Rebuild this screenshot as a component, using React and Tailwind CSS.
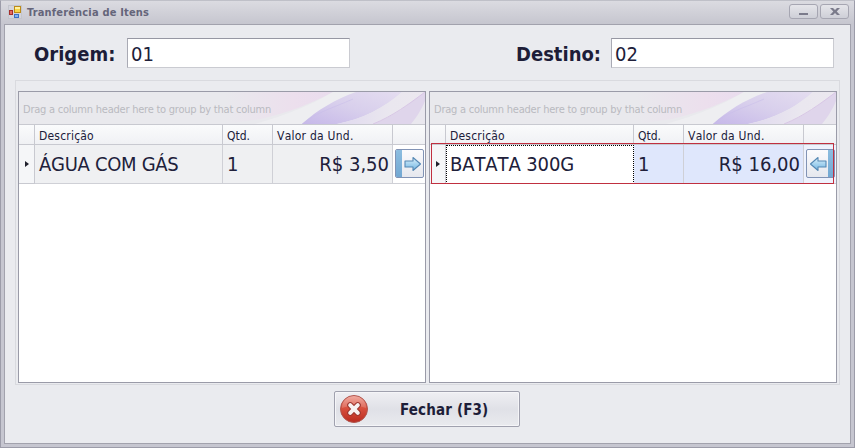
import React from "react";

const BAND =
  "relative h-8 shrink-0 overflow-hidden bg-[#e9e9ed] flex items-center";

function Swoosh({ id }) {
  return (
    <svg className="absolute right-0 top-0" width="200" height="32" viewBox="0 0 200 32">
      <defs>
        <linearGradient id={id + "a"} x1="0" x2="1" y1="1" y2="0">
          <stop offset="0" stopColor="#c6b8e9" />
          <stop offset="0.5" stopColor="#d8cfec" />
          <stop offset="1" stopColor="#e4ddf0" />
        </linearGradient>
        <linearGradient id={id + "b"} x1="0" x2="1" y1="0" y2="0">
          <stop offset="0" stopColor="#e9e9ed" />
          <stop offset="0.65" stopColor="#ecdfed" />
          <stop offset="1" stopColor="#e9dcee" />
        </linearGradient>
        <linearGradient id={id + "c"} x1="0" x2="1" y1="0" y2="0">
          <stop offset="0" stopColor="#e0d9ef" />
          <stop offset="0.6" stopColor="#eae7ef" />
          <stop offset="1" stopColor="#ebe8ef" />
        </linearGradient>
      </defs>
      <path d="M0 0H108C88 11 62 21 36 27L0 32Z" fill={`url(#${id}b)`} />
      <path d="M108 0C86 13 62 23 30 32H77C94 17 113 7 131 0Z" fill="#eeeef1" />
      <path d="M131 0C111 7 92 18 77 32H112C137 27 159 16 177 0Z" fill={`url(#${id}a)`} />
      <path d="M77 32C92 20 108 16 128 7" stroke="#c8bbe9" strokeWidth="1" fill="none" opacity="0.5" />
      <path d="M177 0C160 16 137 27 112 32H148C168 22 187 11 200 0Z" fill={`url(#${id}c)`} />
      <path d="M148 32C168 25 184 12 200 0V10C196 20 192 27 188 32Z" fill="#dfd5eb" />
      <path d="M200 9C196 19 190 27 186 32H200Z" fill="#e9e7ee" />
      <path d="M148 32C168 24 184 12 200 0" stroke="#d8c6e6" fill="none" />
    </svg>
  );
}

function Arrow({ left, id }) {
  return (
    <svg width="18" height="16" viewBox="0 0 18 16" className={left ? "-scale-x-100" : ""}>
      <defs>
        <linearGradient id={id} x1="0" x2="0" y1="0" y2="1">
          <stop offset="0" stopColor="#e0f1fa" />
          <stop offset="0.5" stopColor="#a5d3ef" />
          <stop offset="1" stopColor="#76b6e1" />
        </linearGradient>
      </defs>
      <path d="M1 5H9V1.5L16.5 8L9 14.5V11H1Z" fill={`url(#${id})`} stroke="#5588b4" strokeWidth="1.1" strokeLinejoin="round" />
    </svg>
  );
}

function TransferButton({ left, id }) {
  return (
    <button
      className={`flex h-[29px] w-[29px] items-center overflow-hidden rounded-[2px] border border-[#8193b5] bg-gradient-to-b from-[#fbfbfd] to-[#e6e8ee] ${left ? "flex-row-reverse" : ""}`}
    >
      <span className="h-full w-1.5 shrink-0 bg-gradient-to-b from-[#8cbde0] to-[#72a8d2]" />
      <span className="flex flex-1 justify-center">
        <Arrow left={left} id={id} />
      </span>
    </button>
  );
}

function Grid({ id, name, price, selected }) {
  const cell = selected ? "bg-[#dfe7fc]" : "bg-[#eff0f2]";
  const cols = "grid-cols-[16px_188px_50px_120px_32px]";
  return (
    <section className="relative flex h-[292px] w-[408px] flex-col border border-[#9a9ba8] bg-white">
      <div className={BAND}>
        <Swoosh id={id} />
        <span className="relative whitespace-nowrap pl-1 pt-1 text-[11px] tracking-[-0.23px] text-[#b9bac0]">
          Drag a column header here to group by that column
        </span>
      </div>
      <div className={`grid h-[21px] shrink-0 border-y border-[#c8c9d0] bg-gradient-to-b from-[#fafbfc] to-[#f0f1f4] text-[12px] leading-[22px] text-[#20203a] [font-kerning:none] ${cols}`}>
        <span className="border-r border-[#c8c9d0]" />
        <span className="h-[19px] border-r border-[#c8c9d0] pl-1 tracking-[0.2px]">Descrição</span>
        <span className="h-[19px] border-r border-[#c8c9d0] pl-1">Qtd.</span>
        <span className="h-[19px] border-r border-[#c8c9d0] pl-1 tracking-[0.25px]">Valor da Und.</span>
        <span />
      </div>
      <div className={`grid h-[38px] shrink-0 whitespace-nowrap text-[20px] leading-[38px] text-[#20203a] [font-kerning:none] ${cols}`}>
        <span className="flex items-center justify-center border-b border-r border-[#c8c9d0] bg-[#f5f6f8]">
          <svg width="4" height="6" viewBox="0 0 4 6"><path d="M0 0L4 3L0 6Z" fill="#20202c" /></svg>
        </span>
        <span className={selected ? "border border-dotted border-black bg-white pl-[3px] leading-[36px] tracking-[-0.1px]" : `border-b border-r border-[#cfd0d6] pl-1 tracking-[-0.3px] ${cell}`}>
          {name}
        </span>
        <span className={`border-b border-r border-[#cfd0d6] pl-1 ${cell}`}>1</span>
        <span className={`border-b border-r border-[#cfd0d6] pr-[3px] text-right ${cell}`}>{price}</span>
        <span className={`flex items-start justify-end border-b border-[#cfd0d6] pr-px pt-1 ${selected ? "bg-[#eef2fd]" : "bg-white"}`}>
          <TransferButton left={selected} id={id + "arrow"} />
        </span>
      </div>
      {selected && <div className="pointer-events-none absolute left-[1px] top-[51px] h-[41px] w-[403px] shadow-[inset_0_0_0_1px_#c03040]" />}
    </section>
  );
}

function Field({ label, value, className }) {
  return (
    <label className={`flex items-center ${className}`}>
      <span className="whitespace-nowrap pt-px text-[20px] font-bold text-[#1d1d38]">{label}</span>
      <span className="ml-auto h-[30px] w-[223px] border border-[#cacbd1] border-t-[#9697a3] border-l-[#a9aab4] bg-white pl-[3px] text-[20px] leading-[30px] text-[#20203a]">
        {value}
      </span>
    </label>
  );
}

export default function App() {
  return (
    <div className="flex h-[448px] w-[855px] flex-col overflow-hidden border border-[#9c9ca9] border-t-[#bfc0c8] bg-[#c6c6d0] px-[3px] pb-[3px] font-['DejaVu_Sans_Condensed','DejaVu_Sans',sans-serif] [font-stretch:condensed]">
      <header className="-mx-[3px] flex h-[23px] shrink-0 items-center bg-gradient-to-b from-[#dbdbe1] to-[#c6c6cf] pl-[7px] pr-[5px]">
        <svg width="14" height="14" viewBox="0 0 14 14" className="-mt-0.5">
          <rect x="0.5" y="0.5" width="13" height="13" fill="#d3d4dc" stroke="#c3c5cd" />
          <rect x="6.5" y="1.5" width="6" height="6" fill="#f6d448" stroke="#bd8b18" />
          <rect x="7" y="2" width="5" height="2" fill="#fff1a0" />
          <rect x="1.5" y="5.5" width="3" height="4" fill="#e5695e" stroke="#a42e2c" />
          <rect x="6.5" y="9.5" width="4" height="3" fill="#84b2ef" stroke="#3b71c4" />
        </svg>
        <h1 className="ml-[5px] mt-px text-[11px] font-bold tracking-[0.17px] text-[#65657a]">Tranferência de Itens</h1>
        <div className="-mt-0.5 ml-auto flex gap-[2px]">
          <button className="flex h-[15px] w-[29px] justify-center rounded-[3px] border border-[#a6a6b2] bg-gradient-to-b from-[#e5e5ea] to-[#cecfd7]">
            <span className="mt-2 h-[2px] w-[9px] bg-[#7b7b8b]" />
          </button>
          <button className="flex h-[15px] w-[29px] items-center justify-center rounded-[3px] border border-[#a6a6b2] bg-gradient-to-b from-[#e5e5ea] to-[#cecfd7]">
            <svg width="10" height="7" viewBox="0 0 10 7">
              <path d="M0 0H3L5 2L7 0H10L6.7 3.5L10 7H7L5 5L3 7H0L3.3 3.5Z" fill="#7b7b8b" />
            </svg>
          </button>
        </div>
      </header>
      <main className="flex flex-1 flex-col border border-[#a2a2ad] bg-[#eaebef]">
        <div className="mt-[13px] flex h-[30px] shrink-0 pl-[29px] pr-[16px]">
          <Field label="Origem:" value="01" className="w-[316px]" />
          <Field label="Destino:" value="02" className="ml-auto w-[318px]" />
        </div>
        <div className="ml-[10px] mt-3 flex h-[305px] w-[825px] shrink-0 gap-[3px] border border-[#d9dadf] pl-[2px] pt-[10px]">
          <Grid id="origem" name="ÁGUA COM GÁS" price="R$ 3,50" />
          <Grid id="destino" name="BATATA 300G" price="R$ 16,00" selected />
        </div>
        <button className="ml-[329px] mt-[6px] flex h-[36px] w-[186px] shrink-0 items-center rounded-[2px] border border-[#a0a1ae] bg-gradient-to-b from-[#efeff3] via-[#e0e1e7] to-[#e9eaee] pl-1 shadow-[inset_0_0_0_1px_#f5f5f8]">
          <svg width="30" height="30" viewBox="0 0 30 30">
            <defs>
              <linearGradient id="redDisc" x1="0" x2="0" y1="0" y2="1">
                <stop offset="0" stopColor="#ef9e92" />
                <stop offset="0.45" stopColor="#d9513f" />
                <stop offset="1" stopColor="#b92b20" />
              </linearGradient>
            </defs>
            <circle cx="15" cy="15" r="13.5" fill="url(#redDisc)" stroke="#b0564f" />
            <path d="M3 14A12 12 0 0 1 27 14Q15 9 3 14Z" fill="#fff" opacity="0.16" />
            <path d="M11.2 11.2L18.8 18.8M18.8 11.2L11.2 18.8" stroke="#9c362f" strokeWidth="6" strokeLinecap="round" />
            <path d="M11.2 11.2L18.8 18.8M18.8 11.2L11.2 18.8" stroke="#f7f2f2" strokeWidth="4" strokeLinecap="round" />
          </svg>
          <span className="ml-[31px] whitespace-nowrap pt-[3px] text-[15px] font-bold tracking-[0.15px] text-[#1d1d38]">Fechar (F3)</span>
        </button>
      </main>
    </div>
  );
}
